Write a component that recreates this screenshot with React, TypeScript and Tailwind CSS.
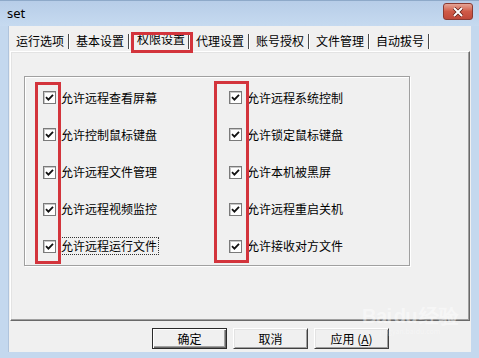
import React from "react";

const TABS = ["运行选项", "基本设置", "权限设置", "代理设置", "账号授权", "文件管理", "自动拔号"];
const LEFT = ["允许远程查看屏幕", "允许控制鼠标键盘", "允许远程文件管理", "允许远程视频监控", "允许远程运行文件"];
const RIGHT = ["允许远程系统控制", "允许锁定鼠标键盘", "允许本机被黑屏", "允许远程重启关机", "允许接收对方文件"];

const cjk = { fontFamily: '"Noto Sans CJK SC", "Noto Sans", sans-serif' };

function Check() {
  return (
    <span className="w-[13px] h-[13px] shrink-0 border border-[#7a7a7a] bg-white flex items-center justify-center shadow-[inset_1px_1px_0_#c8c8c8]">
      <svg width="9" height="9" viewBox="0 0 9 9">
        <path d="M1 4.2 L3.4 6.6 L8 1.8" fill="none" stroke="#111" strokeWidth="1.8" />
      </svg>
    </span>
  );
}

function Row({ label, focus }: { label: string; focus?: boolean }) {
  return (
    <div className="h-[38px] flex items-center gap-[5px]">
      <Check />
      <span
        className={`text-[12px] leading-[14px] text-black whitespace-nowrap ${focus ? "outline outline-1 outline-dotted outline-[#333] outline-offset-[1px]" : ""}`}
      >
        {label}
      </span>
    </div>
  );
}

function Btn({ children, primary }: { children: React.ReactNode; primary?: boolean }) {
  return (
    <button
      className={`w-[75px] h-[21px] bg-[#f0f0f0] text-[12px] leading-none text-black flex items-center justify-center border ${
        primary
          ? "border-[#2b2b2b] shadow-[inset_1px_1px_0_#fff,inset_-1px_-1px_0_#6a6a6a,inset_-2px_-2px_0_#a0a0a0]"
          : "border-[#f0f0f0] border-t-[#fff] border-l-[#fff] border-r-[#404040] border-b-[#404040] shadow-[inset_1px_1px_0_#e3e3e3,inset_-1px_-1px_0_#a0a0a0]"
      }`}
    >
      {children}
    </button>
  );
}

export default function App() {
  return (
    <div className="relative w-[479px] h-[358px] overflow-hidden flex flex-col bg-[#c4d8ee]" style={cjk}>
      {/* title bar */}
      <div className="h-[26px] shrink-0 flex items-center justify-between pl-[7px] pr-[6px] bg-gradient-to-b from-[#b7cde8] to-[#c6daf0] border-t border-[#8ea9c9]">
        <span className="text-[13px] text-black" style={{ fontFamily: '"Noto Sans", sans-serif' }}>
          set
        </span>
        <span className="w-[30px] h-[17px] -mt-[4px] rounded-[3px] border border-[#8a3a32] bg-gradient-to-b from-[#e5a496] via-[#cf5a47] to-[#c0493a] flex items-center justify-center">
          <svg width="12" height="10" viewBox="0 0 12 10">
            <path d="M2 1 L10 9 M10 1 L2 9" stroke="#5a1a12" strokeWidth="3.4" />
            <path d="M2 1 L10 9 M10 1 L2 9" stroke="#fff" strokeWidth="2" />
          </svg>
        </span>
      </div>

      {/* client area */}
      <div className="flex-1 mx-[8px] mb-[6px] bg-[#f0f0f0] flex flex-col border-l border-[#b0c4dc]">
        {/* tabs */}
        <div className="mt-[5px] h-[20px] px-[1px] flex">
          {TABS.map((t, i) => (
            <div key={t} className="w-[60px] h-full flex items-center justify-between">
              <span className={`text-[12px] leading-none text-black ${i === 2 ? "pl-[7px] -mt-[4px]" : "pl-[6px]"}`}>{t}</span>
              <span className="w-[2px] h-[15px] mt-[1px] border-l border-[#4a4a4a] border-r border-r-white" />
            </div>
          ))}
        </div>

        {/* panel */}
        <div className="mx-[1px] h-[270px] border border-t-white border-l-white border-r-[#696969] border-b-[#696969] shadow-[inset_-1px_-1px_0_#a0a0a0,inset_1px_1px_0_#e3e3e3]">
          <div className="ml-[13px] mt-[24px] w-[386px] h-[190px] border border-[#a0a0a0] shadow-[inset_1px_1px_0_#fff,1px_1px_0_#fff] pt-[2px] pl-[18px] flex">
            <div className="w-[186px] flex flex-col">
              {LEFT.map((l, i) => (
                <Row key={l} label={l} focus={i === 4} />
              ))}
            </div>
            <div className="flex flex-col">
              {RIGHT.map((l) => (
                <Row key={l} label={l} />
              ))}
            </div>
          </div>
        </div>

        {/* buttons */}
        <div className="mt-[7px] pl-[143px] flex gap-[6px]">
          <Btn primary>确定</Btn>
          <Btn>取消</Btn>
          <Btn>
            应用 (<u>A</u>)
          </Btn>
        </div>
      </div>

      {/* annotation boxes */}
      <div className="absolute left-[131px] top-[32px] w-[62px] h-[21px] border-[3px] border-[#d3343c]" />
      <div className="absolute left-[35px] top-[82px] w-[26px] h-[182px] border-[3px] border-[#d3343c]" />
      <div className="absolute left-[214px] top-[81px] w-[35px] h-[182px] border-[3px] border-[#d3343c]" />

      {/* watermark */}
      <div className="absolute left-[362px] top-[306px] flex flex-col items-center text-white/45 pointer-events-none">
        <span className="text-[20px] font-bold leading-none tracking-tight" style={{ fontFamily: '"Liberation Sans", sans-serif' }}>
          Bai<span className="mx-[2px]">du</span>经验
        </span>
        <span className="text-[7px] leading-none mt-[2px] text-white/35">jingyan.baidu.com</span>
      </div>
    </div>
  );
}
